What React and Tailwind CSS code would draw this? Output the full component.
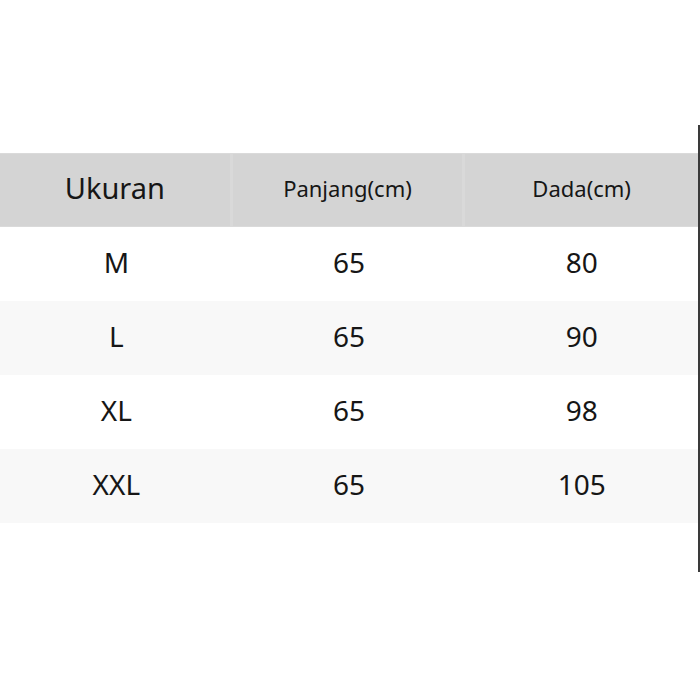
import React from "react";

const rows = [
  ["M", "65", "80"],
  ["L", "65", "90"],
  ["XL", "65", "98"],
  ["XXL", "65", "105"],
];

const App = () => {
  return (
    <div
      className="flex w-[700px] h-[700px] bg-white text-[#161616]"
      style={{ fontFamily: '"Noto Sans", "Open Sans", sans-serif' }}
    >
      <div className="w-[698px] pt-[153px]">
        <div className="grid grid-cols-3 h-[74px] bg-[#d4d4d4] border-y border-[#dadada]">
          <div className="flex items-center justify-center pb-[4px] text-[29px] border-r-[3px] border-[#d9d9d9]">Ukuran</div>
          <div className="flex items-center justify-center pb-[3px] text-[22px] border-r-[3px] border-[#d9d9d9]">Panjang(cm)</div>
          <div className="flex items-center justify-center pb-[3px] text-[22px]">Dada(cm)</div>
        </div>
        {rows.map((r, i) => (
          <div
            key={r[0]}
            className={`grid grid-cols-3 h-[74px] text-[28px] ${i % 2 === 1 ? "bg-[#f8f8f8]" : "bg-white"}`}
          >
            {r.map((c, j) => (
              <div key={j} className="flex items-center justify-center pb-[4px]">{c}</div>
            ))}
          </div>
        ))}
      </div>
      <div className="w-[2px] h-[447px] mt-[125px] bg-[#3a3a3a]" />
    </div>
  );
};

export default App;
